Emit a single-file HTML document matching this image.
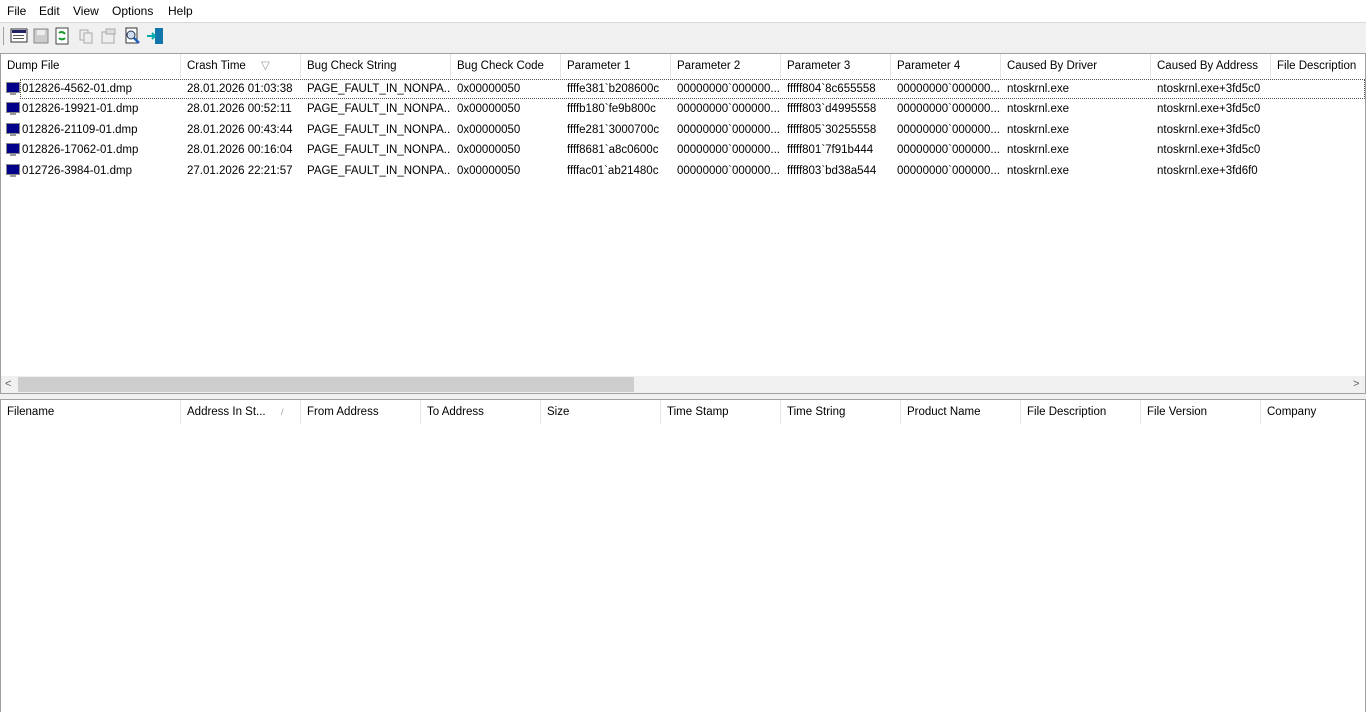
<!DOCTYPE html>
<html><head><meta charset="utf-8"><style>
*{margin:0;padding:0;box-sizing:border-box}
body{width:1366px;height:712px;overflow:hidden;background:#fff;font-family:"Liberation Sans",sans-serif;font-size:11.5px;color:#000;position:relative}
.a{position:absolute;white-space:nowrap}
.menu span{position:absolute;top:4px;font-size:12px}
.hdr{position:absolute;height:24px;left:1px;right:1px;background:#fff}
.hdr div{position:absolute;top:0;height:24px;line-height:24px;padding-left:6px;border-right:1px solid #e5e5e5}
.row{position:absolute;left:1px;height:20px;width:1364px}
.row div{position:absolute;top:0;line-height:20px;padding-left:6px;overflow:hidden;white-space:nowrap}
.ic{position:absolute;left:5px;top:3px;width:14px;height:14px}
</style></head><body>
<div class="menu">
<span style="left:7px">File</span><span style="left:39px">Edit</span><span style="left:73px">View</span><span style="left:112px">Options</span><span style="left:168px">Help</span>
</div>
<div class="a" style="left:0;top:22px;width:1366px;height:31px;background:#f0f0f0;border-top:1px solid #d9d9d9"></div>
<div class="a" style="left:3px;top:27px;width:1px;height:18px;background:#a0a0a0"></div>
<svg class="a" style="left:10px;top:27px" width="160" height="20">
<rect x="1" y="2" width="16" height="13" fill="#fff" stroke="#333"/><rect x="2" y="3" width="14" height="3" fill="#226"/><rect x="3" y="8" width="11" height="1" fill="#555"/><rect x="3" y="11" width="11" height="1" fill="#555"/>
<rect x="24" y="2" width="14" height="14" fill="#ccc" stroke="#888"/><rect x="27" y="3" width="8" height="5" fill="#eee"/>
<rect x="46" y="1" width="12" height="16" fill="#fff" stroke="#444"/><path d="M49 6a4 4 0 0 1 6 1M55 11a4 4 0 0 1-6 0" stroke="#1a9a2a" stroke-width="2" fill="none"/>
<rect x="70" y="3" width="8" height="10" fill="#eee" stroke="#aaa"/><rect x="74" y="6" width="8" height="10" fill="#eee" stroke="#aaa"/>
<rect x="92" y="5" width="12" height="11" fill="#eee" stroke="#aaa"/><rect x="96" y="2" width="9" height="5" fill="#ddd" stroke="#aaa"/>
<rect x="116" y="1" width="11" height="15" fill="#fff" stroke="#333"/><circle cx="121" cy="8" r="4" fill="#cde" stroke="#235"/><path d="M124 11l5 5" stroke="#2060c0" stroke-width="2.5"/>
<rect x="145" y="1" width="8" height="16" fill="#17a" /><path d="M137 9h8M142 6l3 3-3 3" stroke="#0aa" stroke-width="2" fill="none"/>
</svg>
<div class="a" style="left:0;top:53px;width:1366px;height:340px;border:1px solid #a0a0a0;border-bottom:none"></div>
<div class="hdr" style="top:54px">
<div style="left:0;width:180px">Dump File</div>
<div style="left:180px;width:120px">Crash Time <span style="position:absolute;left:80px;color:#999">▽</span></div>
<div style="left:300px;width:150px">Bug Check String</div>
<div style="left:450px;width:110px">Bug Check Code</div>
<div style="left:560px;width:110px">Parameter 1</div>
<div style="left:670px;width:110px">Parameter 2</div>
<div style="left:780px;width:110px">Parameter 3</div>
<div style="left:890px;width:110px">Parameter 4</div>
<div style="left:1000px;width:150px">Caused By Driver</div>
<div style="left:1150px;width:120px">Caused By Address</div>
<div style="left:1270px;width:100px;border:none">File Description</div>
</div>
<div class="a" style="left:20px;top:79px;width:1345px;height:20px;border:1px dotted #555"></div>
<div id="rows"></div>
<script>
var d=[["012826-4562-01.dmp","28.01.2026 01:03:38","ffffe381`b208600c","fffff804`8c655558","ntoskrnl.exe+3fd5c0"],
["012826-19921-01.dmp","28.01.2026 00:52:11","ffffb180`fe9b800c","fffff803`d4995558","ntoskrnl.exe+3fd5c0"],
["012826-21109-01.dmp","28.01.2026 00:43:44","ffffe281`3000700c","fffff805`30255558","ntoskrnl.exe+3fd5c0"],
["012826-17062-01.dmp","28.01.2026 00:16:04","ffff8681`a8c0600c","fffff801`7f91b444","ntoskrnl.exe+3fd5c0"],
["012726-3984-01.dmp","27.01.2026 22:21:57","ffffac01`ab21480c","fffff803`bd38a544","ntoskrnl.exe+3fd6f0"]];
var h="";d.forEach(function(r,i){var t=79+i*20.4;
h+='<div class="row" style="top:'+t+'px"><svg class="ic" viewBox="0 0 14 14"><rect x="0.5" y="0.5" width="13" height="10" fill="#00008b" stroke="#888"/><rect x="4" y="11" width="6" height="2" fill="#999"/></svg>'+
'<div style="left:16px;width:164px;padding-left:5px">'+r[0]+'</div><div style="left:180px;width:120px">'+r[1]+'</div><div style="left:300px;width:150px">PAGE_FAULT_IN_NONPA...</div><div style="left:450px;width:110px">0x00000050</div><div style="left:560px;width:110px">'+r[2]+'</div><div style="left:670px;width:110px">00000000`000000...</div><div style="left:780px;width:110px">'+r[3]+'</div><div style="left:890px;width:110px">00000000`000000...</div><div style="left:1000px">ntoskrnl.exe</div><div style="left:1150px">'+r[4]+'</div></div>';});
document.getElementById("rows").innerHTML=h;
</script>
<div class="a" style="left:1px;top:376px;width:1364px;height:17px;background:#f0f0f0"></div>
<div class="a" style="left:18px;top:377px;width:616px;height:15px;background:#cdcdcd"></div>
<div class="a" style="left:5px;top:376px;line-height:17px;color:#606060;font-size:11px">&lt;</div>
<div class="a" style="left:1353px;top:376px;line-height:17px;color:#606060;font-size:11px">&gt;</div>
<div class="a" style="left:0;top:393px;width:1366px;height:6px;background:#f0f0f0;border-top:1px solid #a0a0a0"></div>
<div class="a" style="left:0;top:399px;width:1366px;height:313px;border:1px solid #a0a0a0;border-bottom:none"></div>
<div class="hdr" style="top:400px">
<div style="left:0;width:180px">Filename</div>
<div style="left:180px;width:120px">Address In St... <span style="position:absolute;left:100px;color:#999;font-size:9px">/</span></div>
<div style="left:300px;width:120px">From Address</div>
<div style="left:420px;width:120px">To Address</div>
<div style="left:540px;width:120px">Size</div>
<div style="left:660px;width:120px">Time Stamp</div>
<div style="left:780px;width:120px">Time String</div>
<div style="left:900px;width:120px">Product Name</div>
<div style="left:1020px;width:120px">File Description</div>
<div style="left:1140px;width:120px">File Version</div>
<div style="left:1260px;width:110px;border:none">Company</div>
</div>
</body></html>
